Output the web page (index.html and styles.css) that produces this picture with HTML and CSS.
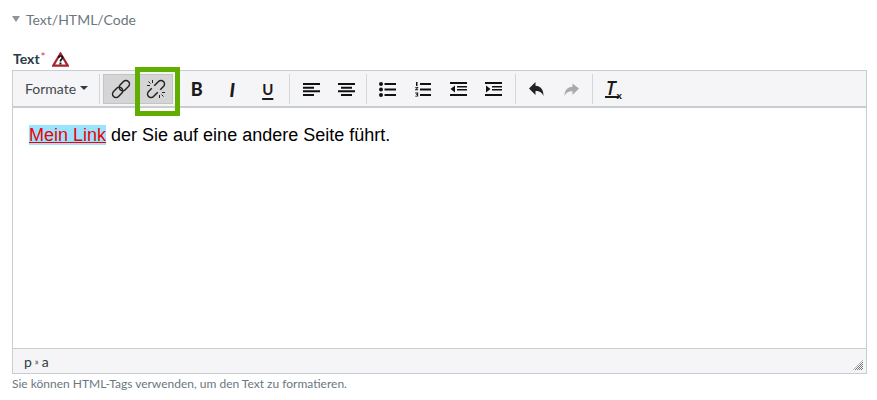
FILE: index.html
```html
<!DOCTYPE html>
<html lang="de">
<head>
<meta charset="utf-8">
<title>Text/HTML/Code</title>
<link rel="stylesheet" href="styles.css">
</head>
<body>
<div class="section"><span class="caret-down"></span><span>Text/HTML/Code</span></div>
<div class="label"><b>Text</b><span class="req">*</span>
<svg class="warn" width="17" height="15" viewBox="0 0 17 15"><path d="M8.500 1.500 15.800 13.700H1.200Z" fill="#fff" stroke="#a5242f" stroke-width="2.200"/><path d="M5.700 5.800c.2-1.700 1.300-2.600 2.900-2.600 1.700 0 2.900 1 2.900 2.400 0 2.200-2.100 2-2.100 3.900H7.600c0-2.600 1.900-2.700 1.900-3.800 0-.6-.3-1-.9-1s-1 .4-1.100 1.200ZM7.500 10.500h1.900v2H7.500Z" fill="#111"/></svg></div>
<div class="editor">
  <div class="toolbar">
    <div class="formats">Formate<span class="caret"></span></div>
    <span class="sep"></span>
    <div class="group tight">
      <button class="btn active"><svg width="20" height="20" viewBox="0 0 20 20" fill="none" stroke="#222" stroke-width="1.500"><g transform="rotate(-45 10 10)"><rect x="-0.500" y="6.500" width="11.500" height="7" rx="3.500"/><rect x="9" y="6.500" width="11.500" height="7" rx="3.500"/></g></svg></button>
      <button class="btn active"><svg width="20" height="20" viewBox="0 0 20 20" fill="none" stroke="#222" stroke-width="1.500"><g transform="rotate(-45 10 10)"><path d="M11 6.500h6a3.500 3.500 0 0 1 0 7h-4.500"/><path d="M9 13.500H3a3.500 3.500 0 0 1 0-7h4.500"/></g><path stroke-width="1" d="M6.500 1v3M1 6.500h3M2.500 2.500l2 2M13.500 19v-3M19 13.500h-3M17.500 17.500l-2-2"/></svg></button>
    </div>
    <div class="group wide">
      <button class="btn glyph bold">B</button>
      <button class="btn glyph ital">I</button>
      <button class="btn glyph under">U</button>
    </div>
    <span class="sep"></span>
    <div class="group shifted">
      <button class="btn"><svg width="17" height="13" viewBox="0 0 17 13" fill="#111"><path d="M0 0h17v2H0zM0 3.700h11v2H0zM0 7.300h17v2H0zM0 11h11v2H0z"/></svg></button>
      <button class="btn"><svg width="17" height="13" viewBox="0 0 17 13" fill="#111"><path d="M0 0h17v2H0zM3 3.700h11v2H3zM0 7.300h17v2H0zM3 11h11v2H3z"/></svg></button>
    </div>
    <span class="sep"></span>
    <div class="group wide">
      <button class="btn"><svg width="17" height="15" viewBox="0 0 17 15" fill="#111"><circle cx="2" cy="2" r="2"/><circle cx="2" cy="7.500" r="2"/><circle cx="2" cy="13" r="2"/><path d="M5.500 1h11.500v2H5.500zM5.500 6.500h11.500v2H5.500zM5.500 12h11.500v2H5.500z"/></svg></button>
      <button class="btn"><svg width="16" height="15" viewBox="0 0 16 15" fill="#111"><path d="M5 1h11v2H5zM5 6.500h11v2H5zM5 12h11v2H5z"/><path d="M1 0h1.500v4H1zM.2 5h3v.9L1.300 7.300h1.900v.9h-3v-.9l2-1.500H.2zM.2 10.500h3v4h-3v-.8h2v-.8H1v-.7h1.200v-.8h-2z"/></svg></button>
      <button class="btn"><svg width="17" height="14" viewBox="0 0 17 14" fill="#111"><path d="M0 0h17v2H0zM7 4h10v1.500H7zM7 7h10v1.500H7zM0 12h17v2H0zM5 3.500v7L.5 7z"/></svg></button>
      <button class="btn"><svg width="17" height="14" viewBox="0 0 17 14" fill="#111"><path d="M0 0h17v2H0zM7 4h10v1.500H7zM7 7h10v1.500H7zM0 12h17v2H0zM1 3.500v7L5.500 7z"/></svg></button>
    </div>
    <span class="sep"></span>
    <div class="group">
      <button class="btn"><svg width="15" height="15" viewBox="0 0 15 15" fill="#222"><path d="M6.500 0v3.800c5 .2 8 3.500 8 10.200-1.500-3.600-3.500-5-8-5.100V13L0 6.500z"/></svg></button>
      <button class="btn"><svg width="15" height="15" viewBox="0 0 15 15" fill="#aaa"><path d="M8.500 1.500v3.300c-5 .2-8 3.500-8 9.200 1.500-3.300 3.500-4.700 8-4.800v3.800L15 6.500z"/></svg></button>
    </div>
    <span class="sep"></span>
    <div class="group">
      <button class="btn glyph clear"><span class="tee">T</span><span class="x">x</span></button>
    </div>
  </div>
  <div class="content"><p><a class="link" href="#">Mein Link</a> der Sie auf eine andere Seite führt.</p></div>
  <div class="status"><span>p</span><span class="chev">»</span><span>a</span><span class="grip"></span></div>
</div>
<p class="hint">Sie können HTML-Tags verwenden, um den Text zu formatieren.</p>
<div class="highlight"></div>
</body>
</html>
```
FILE: styles.css
```css
* { box-sizing: border-box; }
html, body { margin: 0; height: 400px; overflow: hidden; background: #fff; }
body { padding: 11px 10px 0 12px; font-family: Lato, sans-serif; color: #2d3b45; position: relative; }
.section { display: flex; align-items: center; gap: 6px; height: 16px; font-size: 14px; color: #6b7780; }
.caret-down { width: 0; height: 0; border: 4px solid transparent; border-top: 6px solid #8d959b; border-bottom: 0; }
.label { display: flex; align-items: center; height: 18px; margin-top: 22px; padding-left: 1px; font-size: 14px; color: #2d3b45; }
.label b { font-weight: 700; }
.req { color: #e0385c; font-size: 12px; align-self: flex-start; margin-left: 1px; }
.warn { margin-left: 6px; margin-top: 2px; }
.editor { height: 304px; margin-top: 3px; border: 1px solid #c7cdd1; display: flex; flex-direction: column; }
.toolbar { height: 37px; flex: none; display: flex; align-items: center; padding: 4px 0 3px 0; background: #f5f5f7; border-bottom: 2px solid #c7cdd1; }
.formats { width: 86px; display: flex; align-items: center; padding-left: 12px; font-size: 14px; color: #3d4850; margin-top: -2px; }
.caret { width: 0; height: 0; margin-left: 4px; border: 4px solid transparent; border-top: 4px solid #2d3b45; border-bottom: 0; }
.sep { width: 1px; height: 30px; background: #d4d6d8; flex: none; }
.group { display: flex; padding: 0 2px 0 3px; }
.group.tight { padding: 0 3px 0 3px; }
.group.wide { padding: 0 3px 0 3px; }
.group.shifted { padding: 0 1px 0 4px; }
.btn { width: 35.500px; height: 30px; padding: 0; margin: 0; border: 1px solid transparent; background: none; display: flex; align-items: center; justify-content: center; color: #1b1b1b; font-family: Lato, sans-serif; }
.btn.active { width: 35px; background: #d5d5d5; border-color: #c4c4c4; }
.glyph { line-height: 1; }
.bold { font-weight: 900; font-size: 18px; }
.ital { font-style: italic; font-weight: 900; font-size: 19px; }
.under { font-weight: 700; font-size: 15px; text-decoration: underline; text-underline-offset: 3px; text-decoration-thickness: 2px; }
.clear { align-items: flex-start; padding-top: 6px; }
.tee { font-family: "Open Sans", sans-serif; font-style: italic; font-weight: 600; font-size: 19px; line-height: 15px; border-bottom: 2px solid #1b1b1b; padding: 0 4px 0 1px; margin-right: -3px; }
.x { font-style: normal; font-size: 10px; font-weight: 900; margin-top: 9px; }
.content { flex: 1; padding: 17px 16px; background: #fff; font-family: "Liberation Sans", Arial, sans-serif; font-size: 18px; color: #000; }
.content p { margin: 0; line-height: 20px; }
.link { color: #f00000; background: #9ae3ff; text-decoration: underline; }
.status { height: 25px; flex: none; display: flex; align-items: center; gap: 3px; padding-left: 11px; padding-top: 1px; background: #f5f5f7; border-top: 1px solid #c7cdd1; font-size: 14px; color: #2d3b45; position: relative; }
.chev { font-size: 9px; }
.grip { position: absolute; right: 3px; bottom: 3px; width: 10px; height: 10px; background: conic-gradient(#777 25%, transparent 0 50%, #777 0 75%, transparent 0) 0 0 / 2px 2px; clip-path: polygon(100% 0, 100% 100%, 0 100%); }
.hint { margin: 3px 0 0; font-size: 12px; line-height: 14px; color: #6b7780; }
.highlight { position: absolute; left: 135px; top: 67px; width: 45px; height: 49px; border: 5px solid #5fae00; }
```
